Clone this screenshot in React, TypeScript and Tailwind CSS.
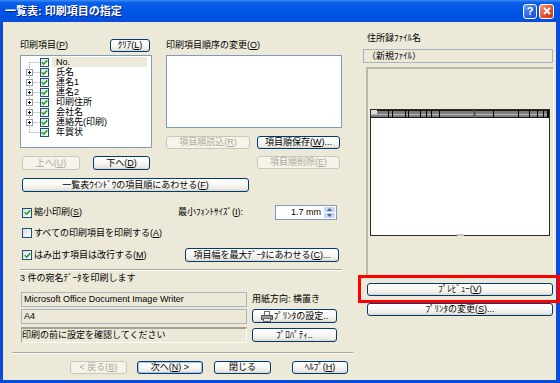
import React from "react";

type Kids = { children?: React.ReactNode };

function U({ children }: Kids) {
  return <span className="underline underline-offset-[1px]">{children}</span>;
}

function Btn({
  className = "",
  disabled = false,
  isDefault = false,
  children,
}: Kids & { className?: string; disabled?: boolean; isDefault?: boolean }) {
  const look = disabled
    ? "border-[#c9c7ba] bg-[#f5f4ea] text-[#aca899]"
    : "border-[#003c74] bg-[linear-gradient(to_bottom,#ffffff_0%,#f8f8f5_45%,#ebe9e1_85%,#d8d2c6_100%)] text-black";
  return (
    <div
      className={`flex shrink-0 items-center justify-center whitespace-nowrap rounded-[3px] border text-[9px] leading-none ${look} ${
        isDefault ? "shadow-[inset_0_0_0_1px_#a8c4f0]" : ""
      } ${className}`}
    >
      {children}
    </div>
  );
}

function Check({ checked = false, small = false }: { checked?: boolean; small?: boolean }) {
  return (
    <span
      className={`flex shrink-0 items-center justify-center border border-[#1c5180] bg-[linear-gradient(135deg,#dcdcd7_0%,#ffffff_100%)] ${
        small ? "h-[9px] w-[9px]" : "h-[10px] w-[10px]"
      }`}
    >
      {checked && (
        <svg width="7" height="7" viewBox="0 0 7 7">
          <path d="M0.8 3.3 L2.7 5.2 L6.2 1.4" fill="none" stroke="#21a121" strokeWidth="1.6" />
        </svg>
      )}
    </span>
  );
}

function TreeLines({ kind }: { kind: "first" | "mid" | "last" }) {
  return (
    <svg width="14" height="10" viewBox="0 0 14 10" className="shrink-0">
      <line
        x1="3.5"
        y1={kind === "first" ? 5 : 0}
        x2="3.5"
        y2={kind === "last" ? 5.5 : 10}
        stroke="#a0a0a0"
        strokeDasharray="1 1"
      />
      <line x1="3.5" y1="5.5" x2="14" y2="5.5" stroke="#a0a0a0" strokeDasharray="1 1" />
      {kind === "mid" && (
        <>
          <rect x="0.5" y="2.5" width="6" height="6" fill="#ffffff" stroke="#8f9dae" />
          <line x1="2" y1="5.5" x2="5" y2="5.5" stroke="#000000" />
          <line x1="3.5" y1="4" x2="3.5" y2="7" stroke="#000000" />
        </>
      )}
    </svg>
  );
}

const treeItems: { label: string; kind: "first" | "mid" | "last" }[] = [
  { label: "No.", kind: "first" },
  { label: "氏名", kind: "mid" },
  { label: "連名1", kind: "mid" },
  { label: "連名2", kind: "mid" },
  { label: "印刷住所", kind: "mid" },
  { label: "会社名", kind: "mid" },
  { label: "連絡先(印刷)", kind: "mid" },
  { label: "年賀状", kind: "last" },
];

function PreviewPage() {
  const ticks = [18, 22, 35, 38, 50, 56, 61, 69, 123, 148, 159, 167, 173];
  return (
    <svg width="180" height="127" viewBox="0 0 180 127" className="block">
      <rect x="0.5" y="0.5" width="179" height="126" fill="#ffffff" stroke="#2a2a2a" />
      <rect x="1" y="1" width="178" height="8" fill="#7c7c7c" />
      <line x1="1" y1="1.5" x2="179" y2="1.5" stroke="#1a1a1a" />
      <line x1="1" y1="5.5" x2="179" y2="5.5" stroke="#b8b8b8" />
      <line x1="1" y1="8.5" x2="179" y2="8.5" stroke="#1a1a1a" />
      <rect x="1" y="1" width="6" height="4" fill="#dcdcdc" />
      {ticks.map((t) => (
        <line key={t} x1={t + 0.5} y1="1" x2={t + 0.5} y2="9" stroke="#000000" />
      ))}
      <line x1="104.5" y1="1" x2="104.5" y2="9" stroke="#555555" strokeWidth="2" />
      <rect x="177" y="1" width="2" height="8" fill="#000000" />
      <rect x="87" y="125" width="7" height="2" fill="#c8c8c8" />
    </svg>
  );
}

function SpinArrow({ up }: { up: boolean }) {
  return (
    <svg width="5" height="3" viewBox="0 0 5 3">
      <path d={up ? "M0 3 L2.5 0 L5 3Z" : "M0 0 L2.5 3 L5 0Z"} fill="#4d6185" />
    </svg>
  );
}

export default function App() {
  return (
    <div className="relative flex h-[383px] w-[560px] flex-col overflow-hidden bg-[#0a4cd9] font-[family-name:Liberation_Sans,Noto_Sans_CJK_JP,sans-serif] text-black">
      {/* Title bar */}
      <div className="flex h-[22px] shrink-0 items-center justify-between bg-[linear-gradient(to_bottom,#3d8df5_0%,#0a5fe8_12%,#0055e5_45%,#0052e0_80%,#0a4cd9_100%)] pl-[5px] pr-[6px]">
        <span className="text-[11px] font-bold leading-none text-white [text-shadow:1px_1px_0_#0a1e8c]">
          一覧表: 印刷項目の指定
        </span>
        <div className="flex items-center gap-[2px]">
          <div className="flex h-[15px] w-[14px] items-center justify-center rounded-[3px] border border-white bg-[linear-gradient(135deg,#6d9ff7_0%,#2a62e6_60%,#1b4fd0_100%)] text-[11px] font-bold leading-none text-white">
            ?
          </div>
          <div className="flex h-[15px] w-[15px] items-center justify-center rounded-[3px] border border-white bg-[linear-gradient(135deg,#f29a7c_0%,#e0532c_55%,#c23a17_100%)]">
            <svg width="8" height="8" viewBox="0 0 8 8">
              <path d="M1 1 L7 7 M7 1 L1 7" stroke="#ffffff" strokeWidth="1.8" />
            </svg>
          </div>
        </div>
      </div>

      {/* Body */}
      <div className="mb-[3px] ml-[3px] mr-[4px] flex flex-1 bg-[#ece9d8]">
        {/* Left wrapper */}
        <div className="ml-[9px] flex w-[341px] flex-col">
          <div className="flex flex-col pl-[8px] pt-[16px]">
            {/* Row 1 */}
            <div className="flex gap-[14px]">
              {/* Tree column */}
              <div className="flex w-[132px] flex-col">
                <div className="flex h-[14px] items-center justify-between">
                  <span className="text-[9px] leading-none">
                    印刷項目(<U>P</U>)
                  </span>
                  <Btn className="mr-[2px] h-[13px] w-[40px]">
                    ｸﾘｱ(<U>L</U>)
                  </Btn>
                </div>
                <div className="mt-[3px] flex h-[93px] flex-col border border-[#7f9db9] bg-white pl-[5px] pt-[1px]">
                  {treeItems.map((it, i) => (
                    <div key={it.label} className="flex h-[10px] items-center">
                      <TreeLines kind={it.kind} />
                      <Check checked small />
                      <div
                        className={`ml-[3px] flex h-[10px] w-[95px] items-center pl-[4px] text-[9px] leading-none ${
                          i === 0 ? "bg-[#ece9d8]" : ""
                        }`}
                      >
                        {it.label}
                      </div>
                    </div>
                  ))}
                </div>
                <div className="mt-[8px] flex">
                  <Btn disabled className="ml-[2px] h-[14px] w-[58px]">
                    上へ(<U>U</U>)
                  </Btn>
                  <Btn className="ml-[13px] h-[14px] w-[57px]">
                    下へ(<U>D</U>)
                  </Btn>
                </div>
              </div>
              {/* Order column */}
              <div className="flex w-[176px] flex-col">
                <div className="flex h-[14px] items-center">
                  <span className="text-[9px] leading-none">
                    印刷項目順序の変更(<U>O</U>)
                  </span>
                </div>
                <div className="mt-[3px] h-[73px] border border-[#7f9db9] bg-white" />
                <div className="mt-[8px] flex">
                  <Btn disabled className="h-[13px] w-[84px]">
                    項目順読込(<U>R</U>)
                  </Btn>
                  <Btn className="ml-[7px] h-[13px] w-[83px]">
                    項目順保存(<U>W</U>)...
                  </Btn>
                </div>
                <Btn disabled className="ml-[91px] mt-[7px] h-[13px] w-[83px]">
                  項目順削除(<U>E</U>)
                </Btn>
              </div>
            </div>

            <Btn className="ml-[2px] mt-[8px] h-[14px] w-[227px]">
              一覧表ｳｲﾝﾄﾞｳの項目順にあわせる(<U>F</U>)
            </Btn>

            {/* Row C */}
            <div className="mt-[13px] flex h-[15px] items-center">
              <div className="flex w-[158px] items-center">
                <span className="ml-[2px]">
                  <Check checked />
                </span>
                <span className="ml-[2px] text-[9px] leading-none">
                  縮小印刷(<U>S</U>)
                </span>
              </div>
              <span className="w-[97px] text-[9px] leading-none">
                最小ﾌｫﾝﾄｻｲｽﾞ(<U>I</U>):
              </span>
              <div className="flex h-[15px] w-[62px] items-stretch border border-[#7f9db9] bg-white">
                <div className="flex flex-1 items-center justify-end pr-[2px] text-[9px] leading-none">1.7 mm</div>
                <div className="flex w-[13px] flex-col gap-[1px] p-[1px]">
                  <div className="flex flex-1 items-center justify-center rounded-[1px] bg-[#c6d5fb]">
                    <SpinArrow up />
                  </div>
                  <div className="flex flex-1 items-center justify-center rounded-[1px] bg-[#c6d5fb]">
                    <SpinArrow up={false} />
                  </div>
                </div>
              </div>
            </div>

            {/* Row D */}
            <div className="mt-[6px] flex h-[14px] items-center">
              <span className="ml-[2px]">
                <Check />
              </span>
              <span className="ml-[2px] text-[9px] leading-none">
                すべての印刷項目を印刷する(<U>A</U>)
              </span>
            </div>

            {/* Row E */}
            <div className="mt-[8px] flex h-[14px] items-center">
              <div className="flex w-[165px] items-center">
                <span className="ml-[2px]">
                  <Check checked />
                </span>
                <span className="ml-[2px] text-[9px] leading-none">
                  はみ出す項目は改行する(<U>M</U>)
                </span>
              </div>
              <Btn className="h-[14px] w-[154px]">
                項目幅を最大ﾃﾞｰﾀにあわせる(<U>C</U>)...
              </Btn>
            </div>

            {/* Separator */}
            <div className="mt-[7px] h-[2px] w-[322px] border-t border-b border-t-[#aca899] border-b-white" />

            <div className="flex h-[14px] items-center">
              <span className="text-[9px] leading-none">3 件の宛名ﾃﾞｰﾀを印刷します</span>
            </div>

            {/* Fields */}
            <div className="mt-[7px] flex">
              <div className="ml-[1px] flex w-[226px] flex-col">
                <div className="flex h-[15px] items-center border border-[#aab4be] bg-[#ece9d8] pl-[2px] text-[9px] leading-none">
                  Microsoft Office Document Image Writer
                </div>
                <div className="mt-[2px] flex h-[15px] items-center border border-[#aab4be] bg-[#ece9d8] pl-[2px] text-[9px] leading-none">
                  A4
                </div>
                <div className="mt-[3px] flex h-[16px] items-center border border-t-2 border-[#a6a293] border-b-[#fbfaf6] border-r-[#fbfaf6] bg-[#ece9d8] text-[9px] leading-none">
                  印刷の前に設定を確認してください
                </div>
              </div>
              <div className="ml-[5px] flex w-[85px] flex-col">
                <div className="flex h-[15px] items-center text-[9px] leading-none">用紙方向: 横置き</div>
                <Btn className="mt-[2px] h-[14px] w-[85px]">
                  <svg width="12" height="11" viewBox="0 0 12 11" className="mr-[1px]">
                    <rect x="3.5" y="0.5" width="5" height="4" fill="#ffffff" stroke="#6b6b6b" />
                    <path d="M0.5 4.5 H11.5 V8.5 H0.5 Z" fill="#a0a0a0" stroke="#4f4f4f" />
                    <rect x="2.5" y="7.5" width="7" height="3" fill="#e8e8e8" stroke="#6b6b6b" />
                    <rect x="9" y="5.5" width="1.5" height="1" fill="#3a7a3a" />
                  </svg>
                  ﾌﾟﾘﾝﾀの設定..
                </Btn>
                <Btn className="mt-[5px] h-[14px] w-[85px]">ﾌﾟﾛﾊﾟﾃｨ..</Btn>
              </div>
            </div>
          </div>

          {/* Bottom separator */}
          <div className="mt-[9px] h-[2px] w-[341px] border-t border-b border-t-[#aca899] border-b-white" />

          {/* Bottom buttons */}
          <div className="mt-[7px] flex">
            <Btn disabled className="ml-[58px] h-[13px] w-[57px]">
              &lt; 戻る(<U>B</U>)
            </Btn>
            <Btn isDefault className="ml-[10px] h-[13px] w-[66px]">
              次へ(<U>N</U>) &gt;
            </Btn>
            <Btn className="ml-[11px] h-[13px] w-[57px]">閉じる</Btn>
            <Btn className="ml-[21px] h-[13px] w-[56px]">
              ﾍﾙﾌﾟ(<U>H</U>)
            </Btn>
          </div>
        </div>

        {/* Right column */}
        <div className="ml-[9px] flex w-[192px] flex-col pt-[9px]">
          <div className="flex h-[14px] items-center pl-[5px]">
            <span className="text-[9px] leading-none">住所録ﾌｧｲﾙ名</span>
          </div>
          <div className="ml-[1px] mt-[4px] flex h-[14px] w-[190px] items-center border border-[#aab4be] bg-[#ece9d8] pl-[3px] text-[9px] leading-none">
            （新規ﾌｧｲﾙ）
          </div>
          <div className="ml-[4px] mt-[4px] h-[210px] w-[188px] border-b border-l-2 border-r border-t-2 border-[#bcb8a8] border-b-white border-r-white">
            <div className="ml-[2px] mt-[40px]">
              <PreviewPage />
            </div>
          </div>
          <Btn className="ml-[5px] mt-[6px] h-[13px] w-[186px]">
            ﾌﾟﾚﾋﾞｭｰ(<U>V</U>)
          </Btn>
          <Btn className="ml-[5px] mt-[7px] h-[13px] w-[186px]">
            ﾌﾟﾘﾝﾀの変更(<U>S</U>)...
          </Btn>
        </div>
      </div>

      {/* Red highlight */}
      <div className="pointer-events-none absolute left-[358px] top-[275px] h-[28px] w-[202px] border-[3px] border-[#ff0000]" />
    </div>
  );
}
